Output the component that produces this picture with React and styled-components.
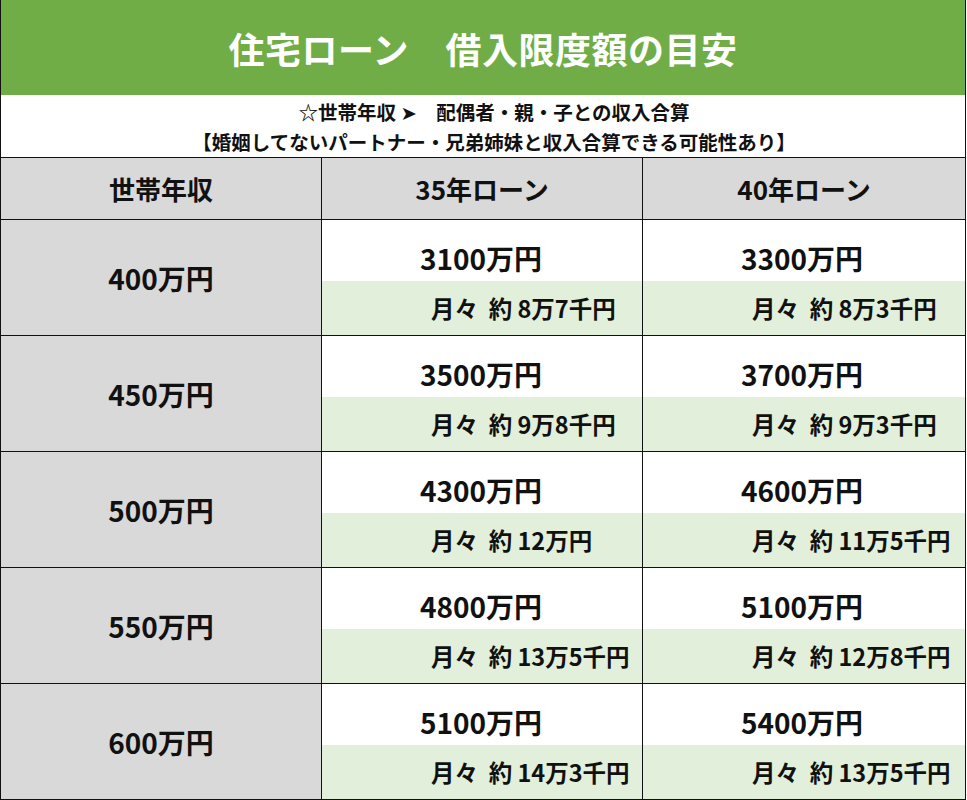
import React from 'react';
import styled, { createGlobalStyle } from 'styled-components';

const GlobalStyle = createGlobalStyle`
  html, body {
    margin: 0;
    padding: 0;
    background: #fff;
  }
  body {
    font-family: "Noto Sans CJK JP", "DejaVu Sans", sans-serif;
    color: #111;
  }
`;

const rows = [
  { income: '400万円', a35: '3100万円', m35: '8万7千円', a40: '3300万円', m40: '8万3千円' },
  { income: '450万円', a35: '3500万円', m35: '9万8千円', a40: '3700万円', m40: '9万3千円' },
  { income: '500万円', a35: '4300万円', m35: '12万円', a40: '4600万円', m40: '11万5千円' },
  { income: '550万円', a35: '4800万円', m35: '13万5千円', a40: '5100万円', m40: '12万8千円' },
  { income: '600万円', a35: '5100万円', m35: '14万3千円', a40: '5400万円', m40: '13万5千円' },
];

// Style
const Sheet = styled.div`
  box-sizing: border-box;
  width: 966px;
  height: 800px;
  border-left: 1px solid #111;
  border-right: 1px solid #111;
  border-bottom: 1px solid #111;
  display: flex;
  flex-direction: column;
`;

const Title = styled.div`
  height: 95px;
  flex-shrink: 0;
  display: flex;
  align-items: center;
  justify-content: center;
  background: #70ad47;
  color: #fff;
  font-size: 36px;
  font-weight: 700;
  letter-spacing: 0.5px;
  white-space: pre;
`;

const Note = styled.div`
  height: 62px;
  flex-shrink: 0;
  box-sizing: border-box;
  padding: 2px 0 0 22px;
  text-align: center;
  font-size: 19.5px;
  font-weight: 700;
  line-height: 30px;
  white-space: pre;
`;

const Grid = styled.div`
  display: grid;
  grid-template-columns: 321px 321px 1fr;
  grid-template-rows: 62px repeat(4, 116px) 115px;
  border-top: 1px solid #111;
`;

const Cell = styled.div`
  box-sizing: content-box;
  border-right: ${(p) => (p.$last ? 'none' : '1px solid #111')};
  border-bottom: ${(p) => (p.$bottom ? 'none' : '1px solid #111')};
`;

const HeadCell = styled(Cell)`
  background: #d9d9d9;
  display: flex;
  align-items: center;
  justify-content: center;
  font-size: 26px;
  font-weight: 700;
`;

const IncomeCell = styled(Cell)`
  background: #d9d9d9;
  display: flex;
  align-items: center;
  justify-content: center;
  font-size: 28px;
  font-weight: 700;
`;

const LoanCell = styled(Cell)`
  display: flex;
  flex-direction: column;
`;

const Amount = styled.div`
  height: 61px;
  flex-shrink: 0;
  box-sizing: border-box;
  display: flex;
  align-items: flex-end;
  padding: 0 0 6px 98px;
  background: #fff;
  font-size: 28px;
  font-weight: 700;
  line-height: 34px;
`;

const Monthly = styled.div`
  flex: 1;
  display: flex;
  align-items: center;
  padding-left: 109px;
  background: #e2efda;
  font-size: 23.5px;
  font-weight: 700;
  white-space: pre;
`;

const LoanBlock = ({ amount, monthly, last, bottom }) => (
  <LoanCell $last={last} $bottom={bottom}>
    <Amount>{amount}</Amount>
    <Monthly>{`月々  約 ${monthly}`}</Monthly>
  </LoanCell>
);

const App = () => {
  return (
    <>
      <GlobalStyle />
      <Sheet>
        <Title>住宅ローン　借入限度額の目安</Title>
        <Note>
          {'☆世帯年収 ➤　配偶者・親・子との収入合算'}
          <br />
          {'【婚姻してないパートナー・兄弟姉妹と収入合算できる可能性あり】'}
        </Note>
        <Grid>
          <HeadCell>世帯年収</HeadCell>
          <HeadCell>35年ローン</HeadCell>
          <HeadCell $last>40年ローン</HeadCell>
          {rows.map((r, i) => {
            const bottom = i === rows.length - 1;
            return (
              <React.Fragment key={r.income}>
                <IncomeCell $bottom={bottom}>{r.income}</IncomeCell>
                <LoanBlock amount={r.a35} monthly={r.m35} bottom={bottom} />
                <LoanBlock amount={r.a40} monthly={r.m40} last bottom={bottom} />
              </React.Fragment>
            );
          })}
        </Grid>
      </Sheet>
    </>
  );
};

export default App;
